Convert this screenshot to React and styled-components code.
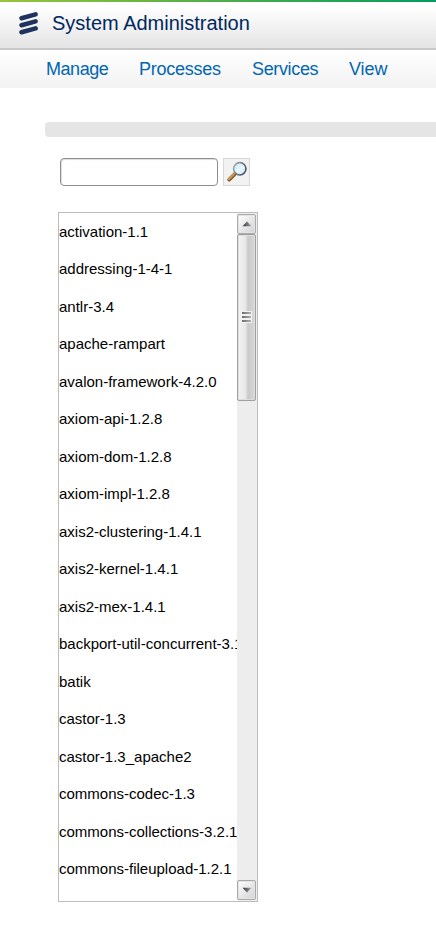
import React from "react";
import styled, { createGlobalStyle } from "styled-components";

const GlobalStyle = createGlobalStyle`
  * { box-sizing: border-box; }
  body {
    margin: 0;
    background: #fff;
    font-family: "Liberation Sans", Arial, sans-serif;
    overflow: hidden;
  }
`;

const Page = styled.div`
  height: 933px;
  overflow: hidden;
`;

const BrandStripe = styled.div`
  height: 2px;
  background: linear-gradient(90deg, #9ac43c 0%, #4fae47 50%, #009e60 100%);
`;

const Header = styled.header`
  display: flex;
  align-items: center;
  height: 48px;
  padding: 0 0 5px 18px;
  background: linear-gradient(#fff 10%, #e4e4e4 100%);
  border-bottom: 2px solid #c8c8c8;
`;

const Title = styled.h1`
  margin: 0 0 0 13px;
  color: #00285f;
  font-size: 20px;
  font-weight: 400;
  line-height: 24px;
`;

const Nav = styled.nav`
  display: flex;
  gap: 31px;
  height: 38px;
  padding-left: 46px;
  background: linear-gradient(#fff, #f2f2f2);
`;

const NavLink = styled.a`
  width: ${({ $width }) => $width}px;
  color: #0066b3;
  font-size: 18px;
  line-height: 38px;
  letter-spacing: ${({ $tracking }) => $tracking}px;
  white-space: nowrap;
`;

const Content = styled.main`
  padding: 34px 0 0 45px;
`;

const Bar = styled.div`
  height: 15px;
  background: #e5e5e5;
  border-radius: 4px 0 0 4px;
`;

const SearchRow = styled.form`
  display: flex;
  gap: 5px;
  margin: 21px 0 0 15px;
`;

const SearchInput = styled.input`
  width: 158px;
  height: 28px;
  padding: 0 4px;
  background: #fff;
  border: 1px solid #8e8e8e;
  border-radius: 4px;
  box-shadow: inset 1px 1px 1px #ddd;
  outline: none;
`;

const SearchButton = styled.button`
  display: flex;
  width: 27px;
  height: 28px;
  padding: 2px;
  background: #f2f2f2;
  border: 1px solid #d8d8d8;
`;

const ListBox = styled.section`
  display: flex;
  width: 200px;
  height: 690px;
  margin: 26px 0 0 13px;
  border: 1px solid #bdbdbd;
`;

const Items = styled.ul`
  flex: 1;
  min-width: 0;
  margin: -0.25px 0 0;
  padding: 0;
  overflow: hidden;
  list-style: none;
`;

const Item = styled.li`
  height: 37.5px;
  color: #000;
  font-size: 15px;
  line-height: 37.5px;
  white-space: nowrap;
`;

const ScrollTrack = styled.div`
  display: flex;
  flex-direction: column;
  width: 20px;
  padding: 1px 1px 1px 0;
  background: #ededed;
`;

const ScrollButton = styled.div`
  display: flex;
  align-items: center;
  justify-content: center;
  height: 20px;
  margin-top: ${({ $bottom }) => ($bottom ? "auto" : 0)};
  background: linear-gradient(135deg, #fff, #d2d2d6);
  border: 1px solid #a9a9a9;
  border-radius: 2px;
  box-shadow: inset 0 0 0 1px #e4e4e4;
`;

const ScrollThumb = styled.div`
  display: flex;
  align-items: center;
  justify-content: center;
  height: 167px;
  padding-bottom: 2px;
  background: linear-gradient(90deg, #f4f4f4 0%, #e7e7e7 45%, #cacaca 58%, #d7d7d7 100%);
  border: 1px solid #a0a0a0;
  border-radius: 2px;
  box-shadow: inset 0 0 0 1px #dedede;
`;

function BrandMark() {
  return (
    <svg width="21" height="25" viewBox="0 0 21 25">
      <g stroke="#20335f" strokeWidth="4.6" strokeLinecap="round">
        <path d="M3.5 8.2 17.6 4.4" />
        <path d="M3.5 15.2 17.6 11.4" />
        <path d="M3.5 22.2 17.6 18.4" />
      </g>
    </svg>
  );
}

function Magnifier() {
  return (
    <svg width="21" height="22" viewBox="0 0 21 22">
      <defs>
        <linearGradient id="lens" x1="0" y1="0" x2="1" y2="1">
          <stop offset="0" stopColor="#c3e1fa" />
          <stop offset=".55" stopColor="#edf8ff" />
          <stop offset="1" stopColor="#b5d9f5" />
        </linearGradient>
        <linearGradient id="rim" x1="0" y1="0" x2="1" y2=".5">
          <stop offset="0" stopColor="#a4adb2" />
          <stop offset="1" stopColor="#4b5358" />
        </linearGradient>
      </defs>
      <path d="m3.2 18.6 5.8-5.8" stroke="#86602f" strokeWidth="3.8" strokeLinecap="round" />
      <path d="m2.9 18 5.4-5.4" stroke="#d39b50" strokeWidth="1.8" strokeLinecap="round" />
      <circle cx="13.8" cy="7.8" r="6.1" fill="url(#lens)" stroke="url(#rim)" strokeWidth="1.7" />
      <circle cx="13.8" cy="7.8" r="4.9" fill="none" stroke="#dcecf5" strokeWidth=".7" />
    </svg>
  );
}

function Arrow({ down }) {
  return (
    <svg width="10" height="6" viewBox="0 0 10 6">
      <defs>
        <linearGradient id={down ? "arrowDown" : "arrowUp"}>
          <stop offset="0" stopColor="#333" />
          <stop offset="1" stopColor="#aaa" />
        </linearGradient>
      </defs>
      <path
        d={down ? "M.5.7h9L5 5.4z" : "M.5 5.3h9L5 .6z"}
        fill={`url(#${down ? "arrowDown" : "arrowUp"})`}
      />
    </svg>
  );
}

function Grip() {
  return (
    <svg width="11" height="12" viewBox="0 0 11 12">
      <defs>
        <linearGradient id="grip" gradientUnits="userSpaceOnUse" x1="1" y1="0" x2="10" y2="0">
          <stop offset="0" stopColor="#6c6c6c" />
          <stop offset="1" stopColor="#b0b0b0" />
        </linearGradient>
      </defs>
      <path d="M0 0h11v12H0z" fill="#f1f1f1" />
      <path d="M1 1h9v2H1zM1 5h9v2H1zM1 9h9v2H1z" fill="url(#grip)" />
    </svg>
  );
}

const menu = [
  { label: "Manage", width: 62, tracking: -0.45 },
  { label: "Processes", width: 82, tracking: -0.25 },
  { label: "Services", width: 66, tracking: -0.35 },
  { label: "View", width: 39, tracking: -0.1 },
];

const libraries = [
  "activation-1.1",
  "addressing-1-4-1",
  "antlr-3.4",
  "apache-rampart",
  "avalon-framework-4.2.0",
  "axiom-api-1.2.8",
  "axiom-dom-1.2.8",
  "axiom-impl-1.2.8",
  "axis2-clustering-1.4.1",
  "axis2-kernel-1.4.1",
  "axis2-mex-1.4.1",
  "backport-util-concurrent-3.1",
  "batik",
  "castor-1.3",
  "castor-1.3_apache2",
  "commons-codec-1.3",
  "commons-collections-3.2.1",
  "commons-fileupload-1.2.1",
];

export default function App() {
  return (
    <Page>
      <GlobalStyle />
      <BrandStripe />
      <Header>
        <BrandMark />
        <Title>System Administration</Title>
      </Header>
      <Nav>
        {menu.map(({ label, width, tracking }) => (
          <NavLink key={label} $width={width} $tracking={tracking}>{label}</NavLink>
        ))}
      </Nav>
      <Content>
        <Bar />
        <SearchRow>
          <SearchInput aria-label="Search" />
          <SearchButton type="button" aria-label="Search">
            <Magnifier />
          </SearchButton>
        </SearchRow>
        <ListBox>
          <Items>
            {libraries.map((name) => (
              <Item key={name}>{name}</Item>
            ))}
          </Items>
          <ScrollTrack>
            <ScrollButton><Arrow /></ScrollButton>
            <ScrollThumb><Grip /></ScrollThumb>
            <ScrollButton $bottom><Arrow down /></ScrollButton>
          </ScrollTrack>
        </ListBox>
      </Content>
    </Page>
  );
}
